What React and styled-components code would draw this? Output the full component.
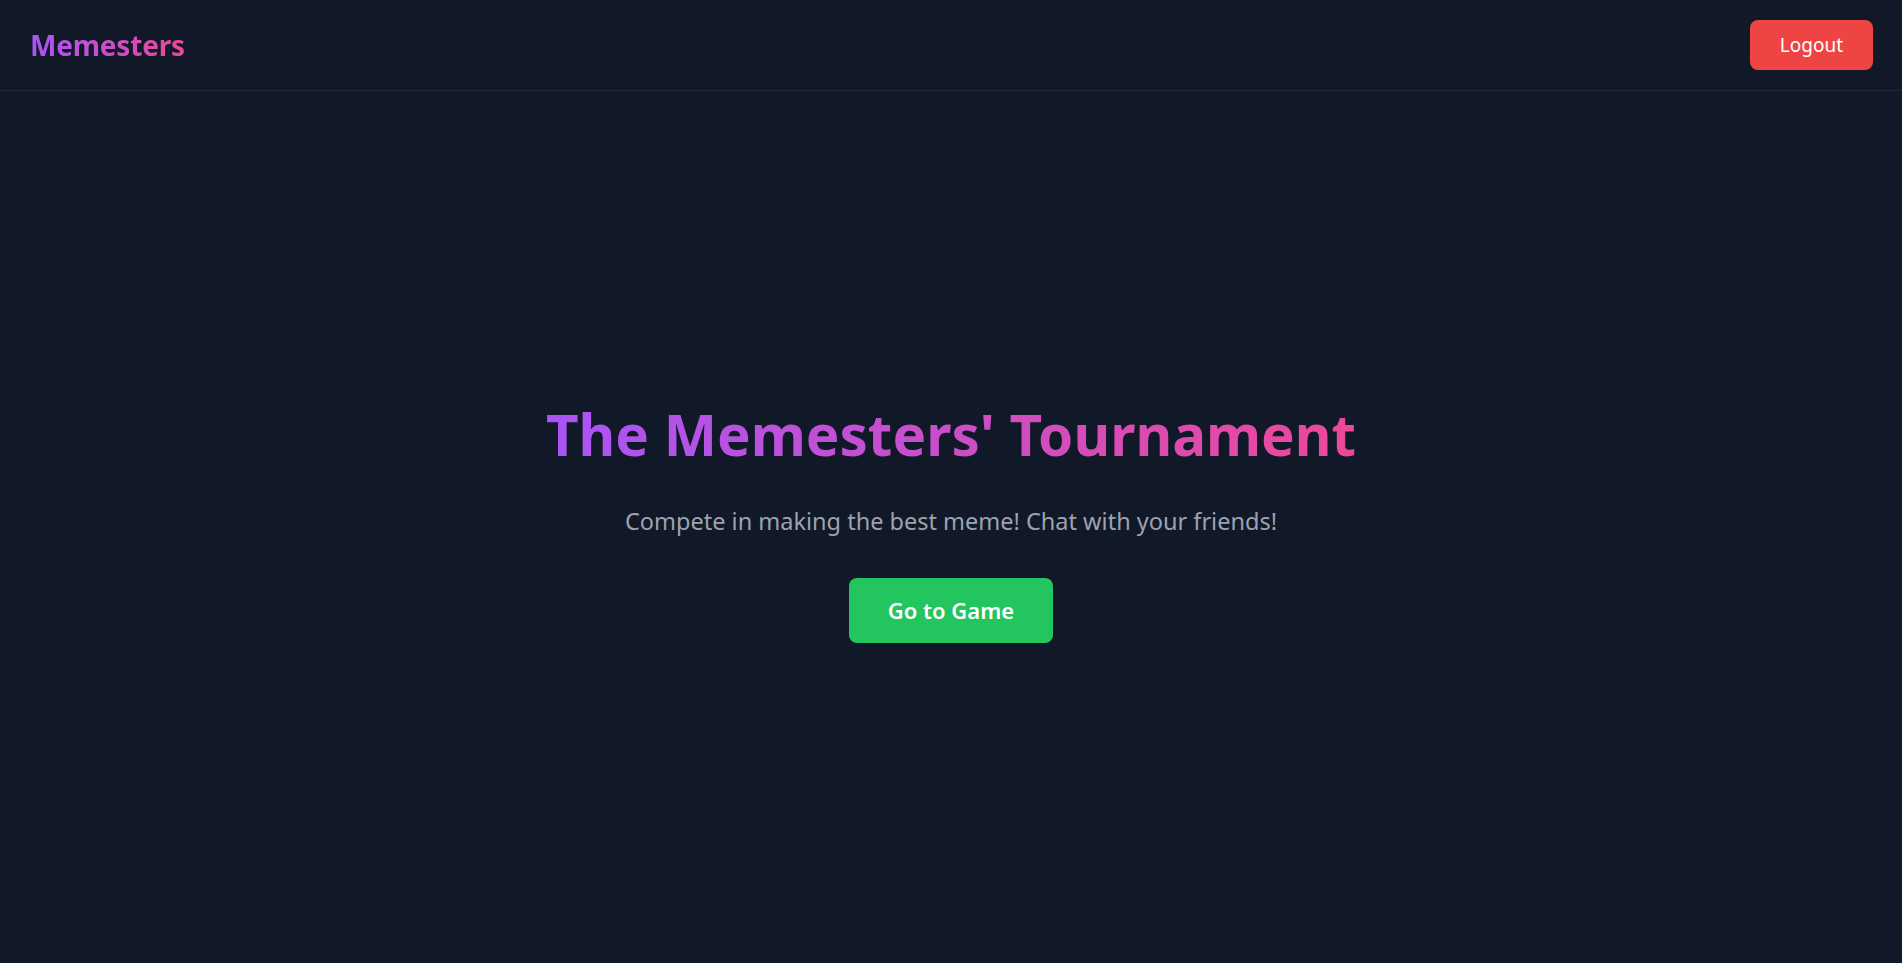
import React from 'react';
import styled, { createGlobalStyle } from 'styled-components';

const GlobalStyle = createGlobalStyle`
  * {
    box-sizing: border-box;
  }
  body {
    margin: 0;
    background: #111827;
    font-family: "Noto Sans", "Open Sans", sans-serif;
  }
`

const Page = styled.div`
  display: flex;
  flex-direction: column;
  min-height: 100vh;
  background: #111827;
`

const Header = styled.header`
  display: flex;
  align-items: center;
  justify-content: space-between;
  height: 91px;
  padding: 0 29px 0 30px;
  border-bottom: 1px solid #1f2937;
`

const GradientText = styled.span`
  background: linear-gradient(to right, #a855f7, #ec4899);
  -webkit-background-clip: text;
  background-clip: text;
  color: transparent;
`

const Logo = styled(GradientText)`
  font-size: 28px;
  font-weight: 700;
  letter-spacing: -0.2px;
`

const Button = styled.button`
  border: none;
  border-radius: 8px;
  color: #fff;
  font-family: inherit;
  cursor: pointer;
  background: ${props => props.color};
  font-size: ${props => props.size}px;
  font-weight: ${props => props.weight || 400};
  padding: ${props => props.pad};
  line-height: ${props => props.lh}px;
`

const Main = styled.main`
  flex: 1;
  display: flex;
  flex-direction: column;
  align-items: center;
  justify-content: center;
  padding-bottom: 6px;
`

const Title = styled.h1`
  margin: 0 0 40px;
  font-size: 56.5px;
  line-height: 60px;
  font-weight: 700;
`

const Subtitle = styled.p`
  margin: 0 0 41px;
  font-size: 23.5px;
  line-height: 32px;
  color: #9ca3af;
`

export default function App() {
  return (
    <Page>
      <GlobalStyle />
      <Header>
        <Logo>Memesters</Logo>
        <Button color="#ef4444" size={19} lh={28} pad="11px 30px">Logout</Button>
      </Header>
      <Main>
        <Title><GradientText>The Memesters' Tournament</GradientText></Title>
        <Subtitle>Compete in making the best meme! Chat with your friends!</Subtitle>
        <Button color="#22c55e" size={22} weight={600} lh={33} pad="16px 39px">Go to Game</Button>
      </Main>
    </Page>
  );
}
